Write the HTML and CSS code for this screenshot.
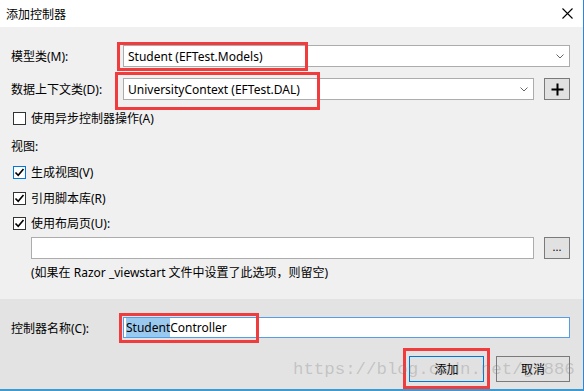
FILE: index.html
```html
<!DOCTYPE html>
<html lang="zh-CN">
<head>
<meta charset="UTF-8">
<title>添加控制器</title>
<link rel="stylesheet" href="styles.css">
</head>
<body>

<div class="dialog">
  <!-- Title bar -->
  <div class="title-bar">
    <span class="title-text">添加控制器</span>
    <svg class="close-icon" width="11" height="11" viewBox="0 0 11 11">
      <path d="M0.5 0.5 L10.5 10.5 M10.5 0.5 L0.5 10.5" stroke="#000" stroke-width="1.1" fill="none"/>
    </svg>
  </div>

  <!-- Main options -->
  <div class="main">
    <div class="field-row">
      <div class="field-label">模型类(M):</div>
      <div class="combo">
        <span>Student (EFTest.Models)</span>
        <svg class="chevron" width="8" height="5" viewBox="0 0 8 5"><path d="M0.5 0.5 L4 4 L7.5 0.5" stroke="#666" fill="none"/></svg>
      </div>
    </div>

    <div class="field-row row-context">
      <div class="field-label">数据上下文类(D):</div>
      <div class="combo">
        <span>UniversityContext (EFTest.DAL)</span>
        <svg class="chevron" width="8" height="5" viewBox="0 0 8 5"><path d="M0.5 0.5 L4 4 L7.5 0.5" stroke="#666" fill="none"/></svg>
      </div>
      <div class="small-btn">
        <svg width="13" height="13" viewBox="0 0 13 13"><path d="M6.5 0.5 V12.5 M0.5 6.5 H12.5" stroke="#000" stroke-width="2" fill="none"/></svg>
      </div>
    </div>

    <div class="check-row check-async">
      <span class="checkbox"></span>
      <span>使用异步控制器操作(A)</span>
    </div>

    <div class="section-label">视图:</div>

    <div class="check-row check-view">
      <span class="checkbox checkbox-focus">
        <svg width="11" height="11" viewBox="0 0 11 11"><path d="M1.5 5.5 L4.2 8.3 L9.5 2" stroke="#000" stroke-width="1.6" fill="none"/></svg>
      </span>
      <span>生成视图(V)</span>
    </div>

    <div class="check-row check-scripts">
      <span class="checkbox">
        <svg width="11" height="11" viewBox="0 0 11 11"><path d="M1.5 5.5 L4.2 8.3 L9.5 2" stroke="#000" stroke-width="1.6" fill="none"/></svg>
      </span>
      <span>引用脚本库(R)</span>
    </div>

    <div class="check-row check-layout">
      <span class="checkbox">
        <svg width="11" height="11" viewBox="0 0 11 11"><path d="M1.5 5.5 L4.2 8.3 L9.5 2" stroke="#000" stroke-width="1.6" fill="none"/></svg>
      </span>
      <span>使用布局页(U):</span>
    </div>

    <div class="layout-row">
      <div class="text-box"></div>
      <div class="small-btn dots">...</div>
    </div>

    <div class="hint">(如果在 Razor _viewstart 文件中设置了此选项，则留空)</div>
  </div>

  <!-- Footer -->
  <div class="footer">
    <div class="field-row name-row">
      <div class="field-label">控制器名称(C):</div>
      <div class="name-input"><span class="selected">Student</span>Controller</div>
    </div>
    <div class="buttons">
      <div class="btn btn-default">添加</div>
      <div class="btn">取消</div>
    </div>
  </div>

  <!-- Red annotation boxes -->
  <div class="mark mark-model"></div>
  <div class="mark mark-context"></div>
  <div class="mark mark-name"></div>
  <div class="mark mark-add"></div>

  <div class="watermark">https://blog.csdn.net/gx886</div>
</div>

</body>
</html>
```

FILE: styles.css
```css
* {
  box-sizing: border-box;
}

body {
  margin: 0;
  font-family: "Noto Sans", "Noto Sans CJK SC", sans-serif;
  font-size: 12px;
  color: #000;
  background: #fff;
}

/* Window */
.dialog {
  position: relative;
  width: 584px;
  height: 391px;
  display: flex;
  flex-direction: column;
  border-right: 1px solid #2f86d8;
  border-bottom: 2px solid #3d9ad1;
  background: #f0f0f0;
  overflow: hidden;
}

.title-bar {
  height: 27px;
  flex: none;
  background: #fff;
  display: flex;
  align-items: center;
  justify-content: space-between;
  padding: 0 10px 0 6px;
}

.title-text {
  font-size: 12px;
}

/* Main area */
.main {
  height: 272px;
  flex: none;
  padding: 18px 13px 0 11px;
}

.field-row {
  display: flex;
  align-items: center;
  height: 22px;
}

.field-label {
  width: 112px;
  flex: none;
}

.combo {
  flex: 1;
  height: 22px;
  display: flex;
  align-items: center;
  justify-content: space-between;
  padding: 0 5px 0 4px;
  background: #fff;
  border: 1px solid #acacac;
}

.row-context {
  margin-top: 11px;
}

.row-context .small-btn {
  margin-left: 10px;
}

.small-btn {
  width: 26px;
  height: 22px;
  flex: none;
  display: flex;
  align-items: center;
  justify-content: center;
  background: #e1e1e1;
  border: 1px solid #7a7a7a;
}

.dots {
  font-size: 11px;
  padding-bottom: 3px;
}

.check-row {
  display: flex;
  align-items: center;
  gap: 5px;
  height: 20px;
  padding-left: 2px;
}

.checkbox {
  width: 13px;
  height: 13px;
  flex: none;
  display: flex;
  align-items: center;
  justify-content: center;
  background: #fff;
  border: 1px solid #333;
}

.checkbox-focus {
  border-color: #0078d7;
}

.check-async {
  margin-top: 8px;
}

.section-label {
  height: 20px;
  line-height: 20px;
  margin-top: 9px;
}

.check-view {
  margin-top: 5px;
}

.check-scripts {
  margin-top: 6px;
}

.check-layout {
  margin-top: 5px;
}

.layout-row {
  display: flex;
  gap: 10px;
  height: 22px;
  margin-top: 4px;
  padding-left: 20px;
}

.text-box {
  flex: 1;
  background: #fff;
  border: 1px solid #acacac;
}

.hint {
  height: 20px;
  line-height: 20px;
  margin-top: 4px;
  padding-left: 20px;
}

/* Footer */
.footer {
  flex: 1;
  background: #e3e3e3;
  padding: 18px 13px 0 11px;
}

.name-row {
  height: 21px;
}

.name-input {
  flex: 1;
  height: 21px;
  display: flex;
  align-items: center;
  padding-left: 2px;
  background: #fff;
  border: 1px solid #569de5;
}

.selected {
  background: #99c9ef;
  padding: 1px 0;
}

.buttons {
  display: flex;
  justify-content: flex-end;
  gap: 12px;
  margin-top: 18px;
}

.btn {
  width: 74px;
  height: 26px;
  display: flex;
  align-items: center;
  justify-content: center;
  background: #e1e1e1;
  border: 1px solid #7a7a7a;
}

.btn-default {
  width: 75px;
  border-color: #0078d7;
}

/* Red highlight marks drawn over the dialog */
.mark {
  position: absolute;
  border: 3px solid #f03c3c;
}

.mark-model {
  left: 117px;
  top: 42px;
  width: 191px;
  height: 29px;
}

.mark-context {
  left: 115px;
  top: 72px;
  width: 205px;
  height: 38px;
}

.mark-name {
  left: 119px;
  top: 313px;
  width: 140px;
  height: 30px;
}

.mark-add {
  left: 403px;
  top: 348px;
  width: 87px;
  height: 41px;
}

.watermark {
  position: absolute;
  left: 293px;
  top: 360px;
  font-family: "Liberation Mono", monospace;
  font-size: 17.4px;
  line-height: 20px;
  color: rgba(120, 120, 120, 0.3);
  white-space: nowrap;
}
```
